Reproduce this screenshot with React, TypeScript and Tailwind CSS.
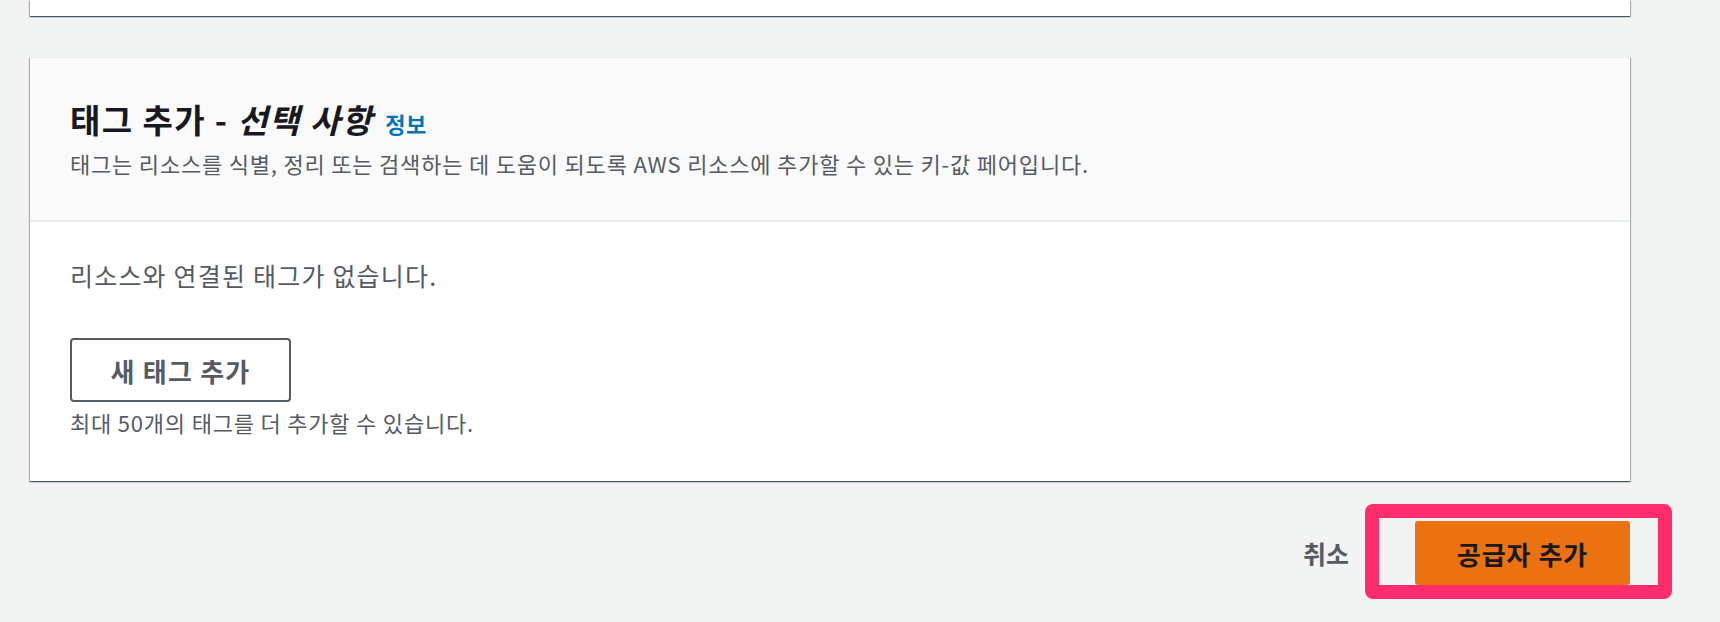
import React from "react";

const font = { fontFamily: '"Noto Sans CJK KR", "Noto Sans", sans-serif' };

export default function App() {
  return (
    <div
      className="min-h-[622px] w-full bg-[#f2f3f3] pl-[30px] pr-[90px] overflow-hidden"
      style={font}
    >
      {/* bottom of previous card */}
      <div className="h-[16px] bg-white shadow-[0_1px_1px_0_rgba(0,28,36,0.5),1px_1px_1px_0_rgba(0,28,36,0.25),-1px_1px_1px_0_rgba(0,28,36,0.25)]" />

      {/* Tags card */}
      <div className="mt-[41px] bg-white shadow-[0_1px_1px_0_rgba(0,28,36,0.5),1px_1px_1px_0_rgba(0,28,36,0.25),-1px_1px_1px_0_rgba(0,28,36,0.25)] border-t border-[#eaeded]">
        <div className="bg-[#fafafa] border-b-2 border-[#eaeded] px-[40px] pt-[41px] pb-[42px]">
          <div className="flex items-baseline gap-[12px]">
            <h2 className="text-[33px] leading-[40px] font-bold text-[#16191f] tracking-[1.4px]">
              태그 추가 - <i>선택 사항</i>
            </h2>
            <span className="text-[22px] leading-[40px] font-bold text-[#0073bb] tracking-[0.5px]">정보</span>
          </div>
          <p className="mt-[5px] text-[22px] leading-[30px] text-[#545b64] tracking-[0.8px]">
            태그는 리소스를 식별, 정리 또는 검색하는 데 도움이 되도록 AWS 리소스에 추가할 수 있는 키-값 페어입니다.
          </p>
        </div>
        <div className="px-[40px] pt-[36px] pb-[45px]">
          <p className="text-[25px] leading-[34px] text-[#545b64] tracking-[1.2px]">리소스와 연결된 태그가 없습니다.</p>
          <button className="mt-[46px] w-[221px] h-[64px] border-2 border-[#545b64] rounded-[4px] bg-white text-[26px] font-bold text-[#545b64] tracking-[1.2px] flex items-center justify-center">
            새 태그 추가
          </button>
          <p className="mt-[6px] text-[22px] leading-[28px] text-[#545b64] tracking-[0.8px]">
            최대 50개의 태그를 더 추가할 수 있습니다.
          </p>
        </div>
      </div>

      {/* Actions */}
      <div className="mt-[40px] flex justify-end items-center">
        <button className="mr-[66px] text-[25px] font-bold text-[#545b64] leading-[34px]">취소</button>
        <div className="relative">
          <button className="w-[215px] h-[64px] rounded-[3px] bg-[#ec7211] text-[26px] font-bold text-[#16191f] tracking-[1px] flex items-center justify-center">
            공급자 추가
          </button>
          <div className="absolute -top-[17px] -left-[50px] -right-[42px] -bottom-[14px] border-[14px] border-[#ff2d6e] rounded-[8px] pointer-events-none" />
        </div>
      </div>
    </div>
  );
}
